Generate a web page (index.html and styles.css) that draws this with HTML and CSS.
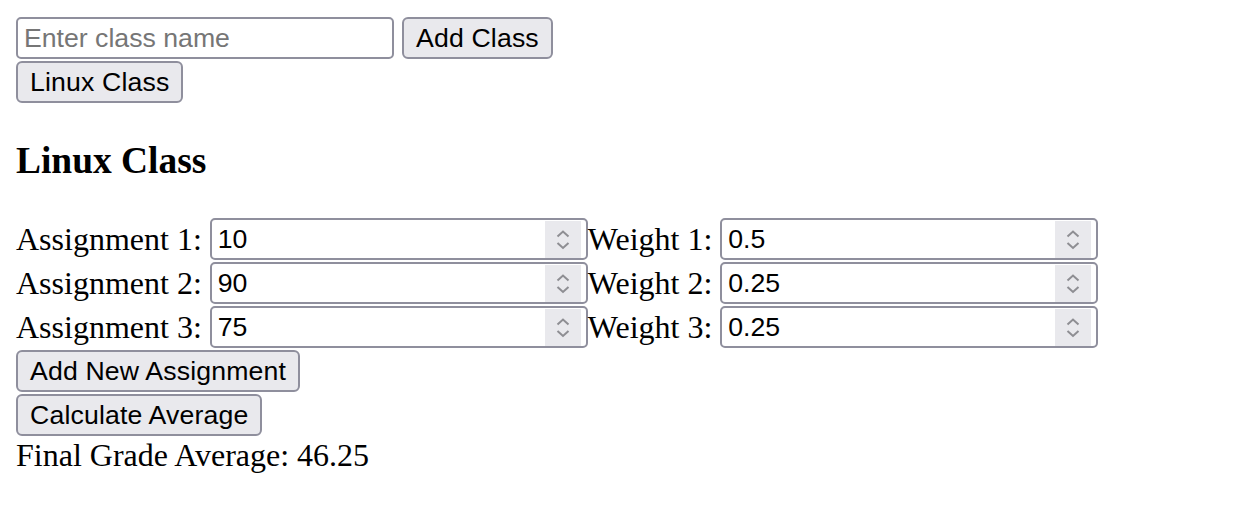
FILE: index.html
```html
<!DOCTYPE html>
<html>
<head>
<meta charset="utf-8">
<title>Grade Calculator</title>
<link rel="stylesheet" href="styles.css">
</head>
<body>
<div class="row">
  <input class="text-input" type="text" placeholder="Enter class name">
  <button class="btn">Add Class</button>
</div>
<div class="row">
  <button class="btn">Linux Class</button>
</div>
<h3 class="title">Linux Class</h3>
<div class="row">
  <span class="label">Assignment 1:</span>
  <span class="numbox"><input class="num" type="text" value="10"><span class="spin"><svg viewBox="0 0 36 37" width="36" height="37"><path d="M12.5 15.5 L18 10.5 L23.5 15.5" /><path d="M12.5 22 L18 27 L23.5 22" /></svg></span></span>
  <span class="label weight">Weight 1:</span>
  <span class="numbox"><input class="num" type="text" value="0.5"><span class="spin"><svg viewBox="0 0 36 37" width="36" height="37"><path d="M12.5 15.5 L18 10.5 L23.5 15.5" /><path d="M12.5 22 L18 27 L23.5 22" /></svg></span></span>
</div>
<div class="row">
  <span class="label">Assignment 2:</span>
  <span class="numbox"><input class="num" type="text" value="90"><span class="spin"><svg viewBox="0 0 36 37" width="36" height="37"><path d="M12.5 15.5 L18 10.5 L23.5 15.5" /><path d="M12.5 22 L18 27 L23.5 22" /></svg></span></span>
  <span class="label weight">Weight 2:</span>
  <span class="numbox"><input class="num" type="text" value="0.25"><span class="spin"><svg viewBox="0 0 36 37" width="36" height="37"><path d="M12.5 15.5 L18 10.5 L23.5 15.5" /><path d="M12.5 22 L18 27 L23.5 22" /></svg></span></span>
</div>
<div class="row">
  <span class="label">Assignment 3:</span>
  <span class="numbox"><input class="num" type="text" value="75"><span class="spin"><svg viewBox="0 0 36 37" width="36" height="37"><path d="M12.5 15.5 L18 10.5 L23.5 15.5" /><path d="M12.5 22 L18 27 L23.5 22" /></svg></span></span>
  <span class="label weight">Weight 3:</span>
  <span class="numbox"><input class="num" type="text" value="0.25"><span class="spin"><svg viewBox="0 0 36 37" width="36" height="37"><path d="M12.5 15.5 L18 10.5 L23.5 15.5" /><path d="M12.5 22 L18 27 L23.5 22" /></svg></span></span>
</div>
<div class="row">
  <button class="btn">Add New Assignment</button>
</div>
<div class="row">
  <button class="btn">Calculate Average</button>
</div>
<p class="result">Final Grade Average: 46.25</p>
</body>
</html>
```
FILE: styles.css
```css
body {
  margin: 16px;
  font-family: "Liberation Serif", "Times New Roman", serif;
  font-size: 32px;
  color: #000;
  background: #fff;
}

.row {
  display: flex;
  align-items: center;
  height: 44px;
}

.text-input {
  box-sizing: border-box;
  width: 378px;
  height: 42px;
  margin: 0 8px 0 0;
  padding: 2px 6px;
  border: 2px solid #8f8f9d;
  border-radius: 5px;
  font-family: "Liberation Sans", Arial, sans-serif;
  font-size: 26.67px;
  color: #000;
  background: #fff;
  outline: none;
}

.text-input::placeholder {
  color: #767676;
}

.btn {
  box-sizing: border-box;
  height: 42px;
  margin: 0;
  padding: 0 12px;
  border: 2px solid #8f8f9d;
  border-radius: 6px;
  background: #e9e9ed;
  font-family: "Liberation Sans", Arial, sans-serif;
  font-size: 26.67px;
  letter-spacing: 0.15px;
  color: #000;
}

.title {
  margin: 37px 0;
  font-size: 37.44px;
  line-height: 39px;
  font-weight: bold;
}

.label {
  margin-right: 8px;
  white-space: pre;
}

.weight {
  margin-left: 0;
  margin-right: 8px;
}

.numbox {
  box-sizing: border-box;
  width: 378px;
  height: 42px;
  display: flex;
  align-items: center;
  padding: 0 5px 0 6px;
  border: 2px solid #8f8f9d;
  border-radius: 5px;
  background: #fff;
}

.num {
  flex: 1;
  min-width: 0;
  margin: 0;
  padding: 0;
  border: 0;
  outline: none;
  background: transparent;
  font-family: "Liberation Sans", Arial, sans-serif;
  font-size: 26.67px;
  color: #000;
}

.spin {
  width: 36px;
  height: 37px;
  display: flex;
  background: #e9e9ed;
}

.spin svg {
  display: block;
  fill: none;
  stroke: #8e8e93;
  stroke-width: 2;
}

.result {
  margin: 0;
}
```
